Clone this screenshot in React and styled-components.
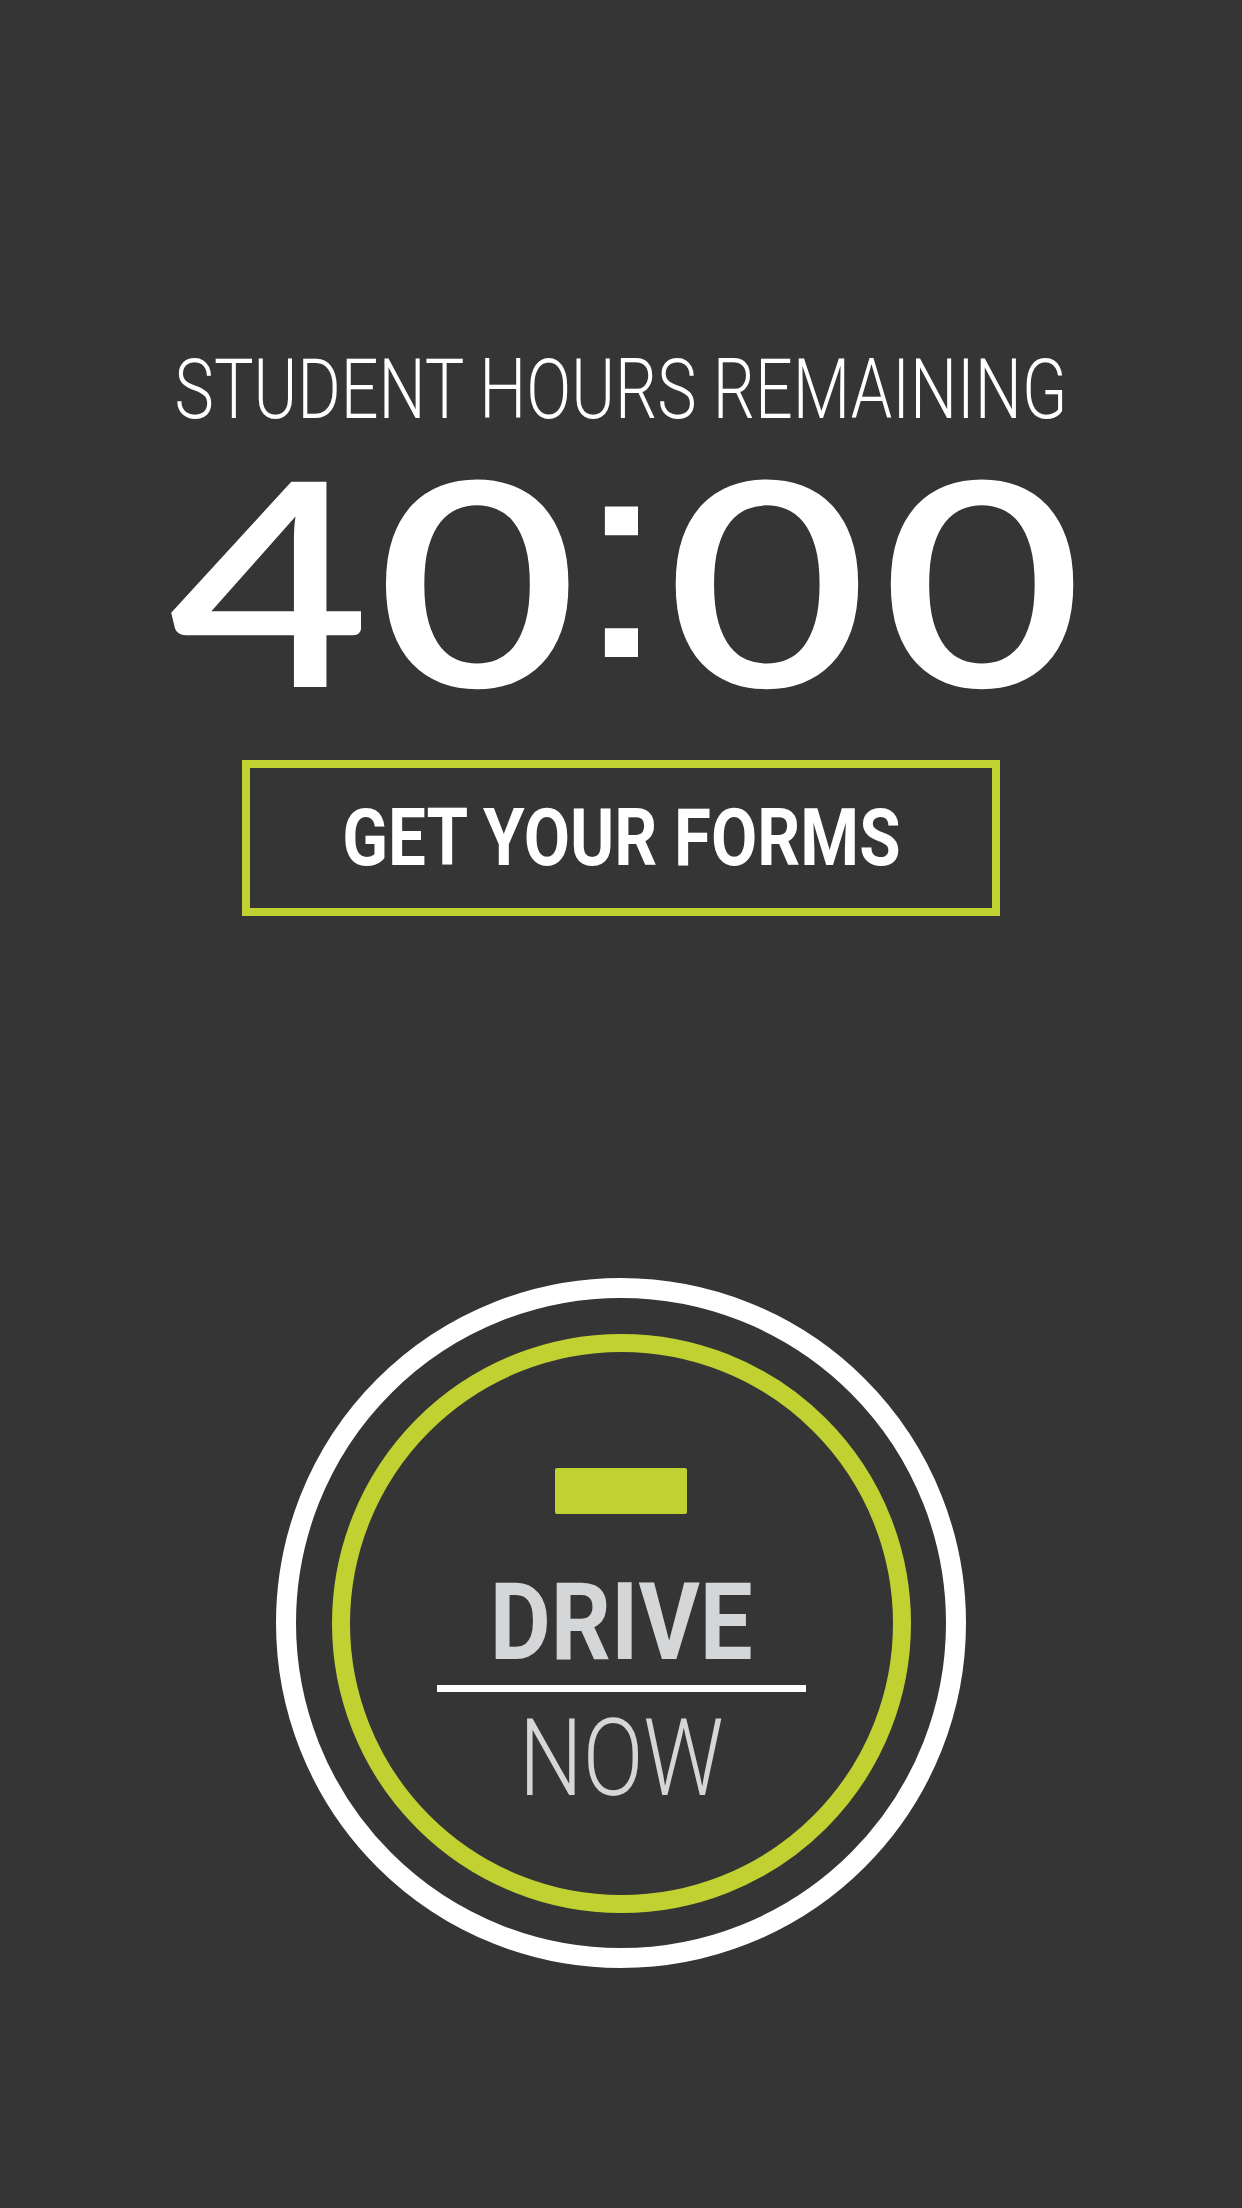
import React from 'react';
import styled, { createGlobalStyle } from 'styled-components';

const colors = {
    background: '#353535',
    lime: '#c1d132',
    white: '#ffffff',
    silver: '#d5d6d8',
};

const GlobalStyle = createGlobalStyle`
    html, body {
        margin: 0;
        padding: 0;
        background-color: ${colors.background};
    }
    body {
        font-family: Roboto, 'Liberation Sans', sans-serif;
    }
`;

const Page = styled.div`
    min-height: 2208px;
    box-sizing: border-box;
    padding-top: 348px;
    display: flex;
    flex-direction: column;
    align-items: center;
    color: ${colors.white};
`;

// squeezes or widens a run of text to the width of the original typeface
const Stretch = styled.span`
    display: inline-block;
    white-space: nowrap;
    transform: scaleX(${props => props.$x});
    transform-origin: center;
`;

const Heading = styled.h1`
    margin: 0;
    font-size: 83px;
    line-height: 1;
    font-weight: 300;
`;

const Timer = styled.div`
    margin-top: 4px;
    padding-left: 10px;
    font-family: Lato, Roboto, sans-serif;
    font-size: 285px;
    line-height: 1;
    font-weight: 600;
`;

// one figure of the clock, with the space that follows it
const Digit = styled.span`
    letter-spacing: ${props => props.$gap}px;
`;

// square, raised colon of a clock face
const Colon = styled.span`
    font-family: 'Liberation Sans', sans-serif;
    font-weight: 400;
    line-height: 0;
    vertical-align: 30px;
    letter-spacing: ${props => props.$gap}px;
`;

const FormsButton = styled.button`
    margin-top: 40px;
    width: 758px;
    height: 156px;
    box-sizing: border-box;
    border: 8px solid ${colors.lime};
    background: transparent;
    color: ${colors.white};
    display: flex;
    align-items: center;
    justify-content: center;
    font-family: Roboto, 'Liberation Sans', sans-serif;
    font-size: 80px;
    line-height: 1;
    font-weight: 700;
    padding: 0;
    cursor: pointer;
`;

const OuterRing = styled.div`
    margin-top: 362px;
    width: 690px;
    height: 690px;
    box-sizing: border-box;
    border: 20px solid ${colors.white};
    border-radius: 50%;
    display: flex;
    align-items: center;
    justify-content: center;
`;

const InnerRing = styled.div`
    width: 579px;
    height: 579px;
    box-sizing: border-box;
    border: 18px solid ${colors.lime};
    border-radius: 50%;
    padding-top: 116px;
    display: flex;
    flex-direction: column;
    align-items: center;
`;

const Bar = styled.div`
    width: 132px;
    height: 46px;
    border-radius: 2px;
    background-color: ${colors.lime};
`;

const DriveLabel = styled.div`
    margin-top: 54px;
    font-size: 108px;
    line-height: 1;
    font-weight: 700;
    color: ${colors.silver};
`;

const Divider = styled.div`
    margin-top: 9px;
    width: 369px;
    height: 7px;
    background-color: ${colors.white};
`;

const NowLabel = styled.div`
    margin-top: 12px;
    font-size: 108px;
    line-height: 1;
    font-weight: 300;
    color: ${colors.silver};
`;

export default function App() {
    return (
        <>
            <GlobalStyle />
            <Page>
                <Heading>
                    <Stretch $x={0.8}>STUDENT HOURS REMAINING</Stretch>
                </Heading>
                <Timer>
                    <Stretch $x={1.22}>
                        <Digit $gap={5}>4</Digit>
                        <Digit $gap={-4}>0</Digit>
                        <Colon $gap={-3}>:</Colon>
                        <Digit $gap={11}>0</Digit>
                        <Digit $gap={0}>0</Digit>
                    </Stretch>
                </Timer>
                <FormsButton>
                    <Stretch $x={0.84}>GET YOUR FORMS</Stretch>
                </FormsButton>
                <OuterRing>
                    <InnerRing>
                        <Bar />
                        <DriveLabel>
                            <Stretch $x={0.87}>DRIVE</Stretch>
                        </DriveLabel>
                        <Divider />
                        <NowLabel>
                            <Stretch $x={0.83}>NOW</Stretch>
                        </NowLabel>
                    </InnerRing>
                </OuterRing>
            </Page>
        </>
    );
};
